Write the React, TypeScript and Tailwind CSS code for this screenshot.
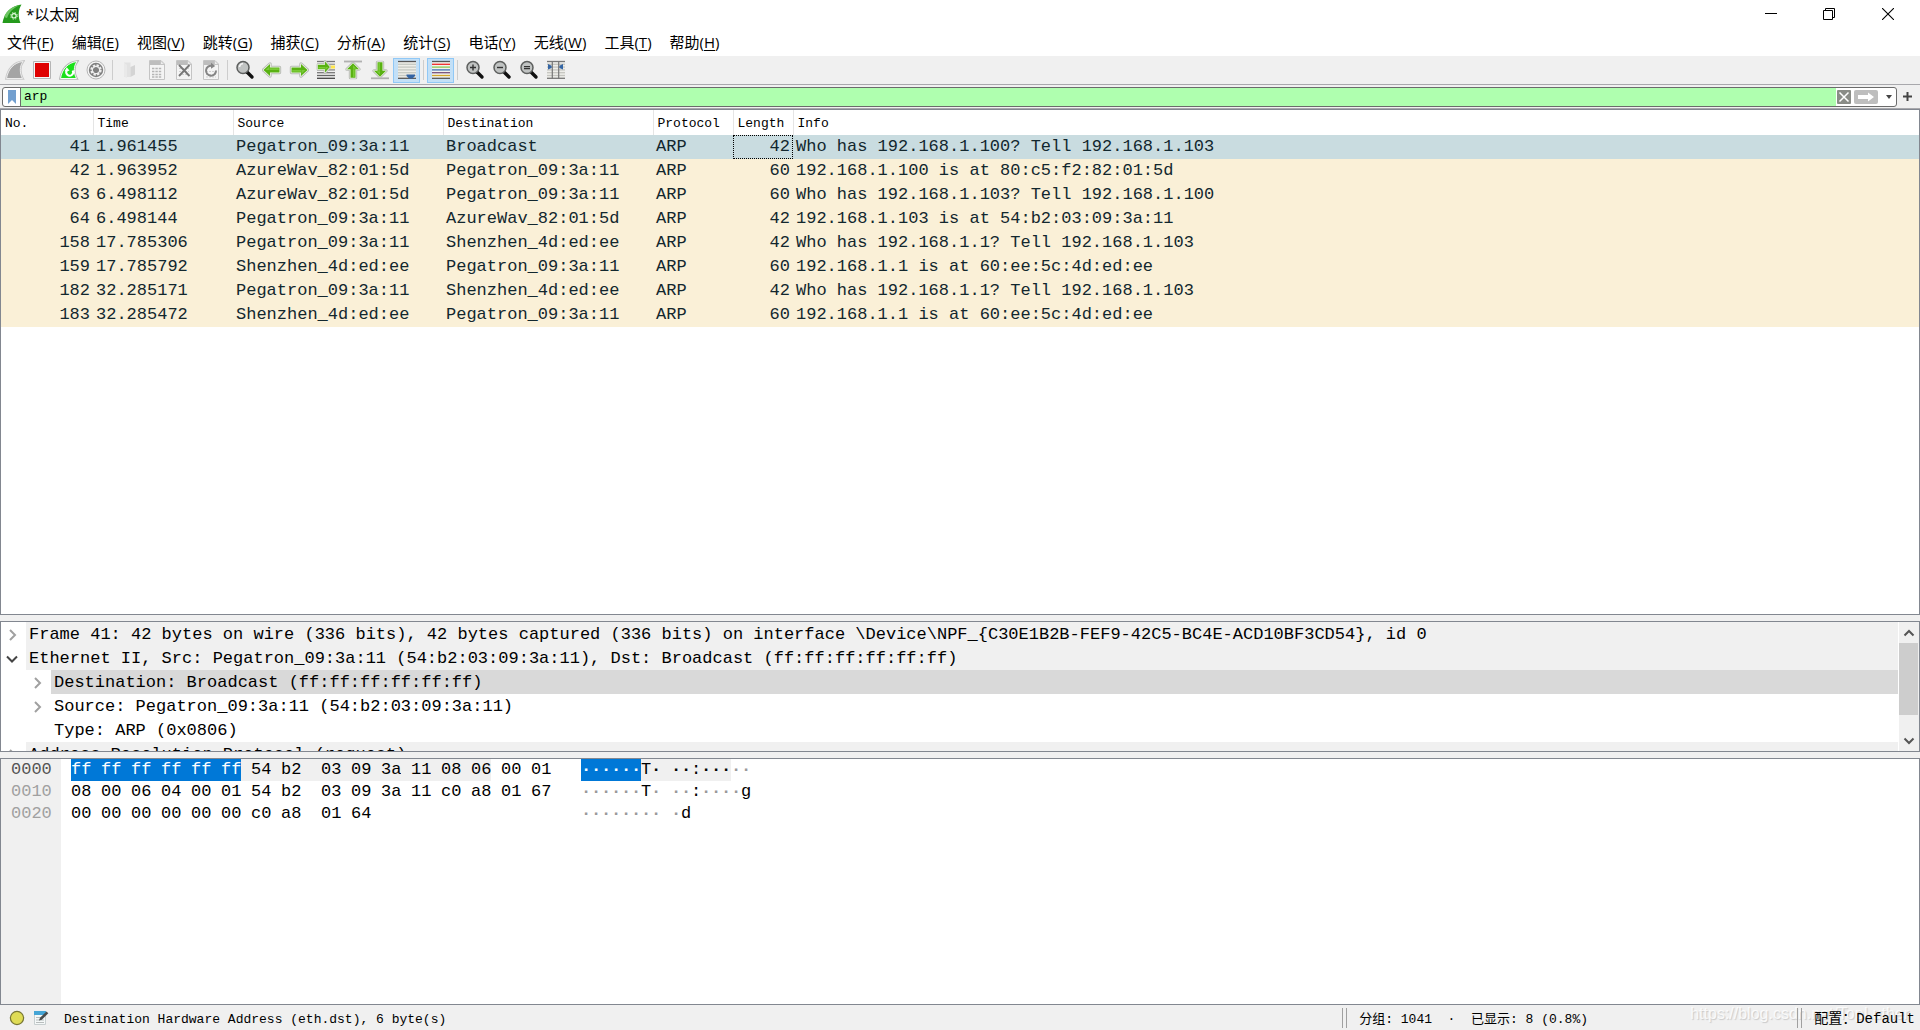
import { FC, Fragment, ReactNode, useState } from 'react';
import clsx from 'clsx';

const MONO = "font-['Liberation_Mono','Noto_Sans_CJK_SC',monospace]";
const UI = "font-['Open_Sans','Noto_Sans_CJK_SC',sans-serif]";

const menuItems = [
  { title: '文件', key: 'F' },
  { title: '编辑', key: 'E' },
  { title: '视图', key: 'V' },
  { title: '跳转', key: 'G' },
  { title: '捕获', key: 'C' },
  { title: '分析', key: 'A' },
  { title: '统计', key: 'S' },
  { title: '电话', key: 'Y' },
  { title: '无线', key: 'W' },
  { title: '工具', key: 'T' },
  { title: '帮助', key: 'H' },
];

const columns = [
  { title: 'No.', width: 'w-[92px]' },
  { title: 'Time', width: 'w-[140px]' },
  { title: 'Source', width: 'w-[210px]' },
  { title: 'Destination', width: 'w-[210px]' },
  { title: 'Protocol', width: 'w-[80px]' },
  { title: 'Length', width: 'w-[60px]' },
  { title: 'Info', width: '' },
];

const packets = [
  ['41', '1.961455', 'Pegatron_09:3a:11', 'Broadcast', 'ARP', '42', 'Who has 192.168.1.100? Tell 192.168.1.103'],
  ['42', '1.963952', 'AzureWav_82:01:5d', 'Pegatron_09:3a:11', 'ARP', '60', '192.168.1.100 is at 80:c5:f2:82:01:5d'],
  ['63', '6.498112', 'AzureWav_82:01:5d', 'Pegatron_09:3a:11', 'ARP', '60', 'Who has 192.168.1.103? Tell 192.168.1.100'],
  ['64', '6.498144', 'Pegatron_09:3a:11', 'AzureWav_82:01:5d', 'ARP', '42', '192.168.1.103 is at 54:b2:03:09:3a:11'],
  ['158', '17.785306', 'Pegatron_09:3a:11', 'Shenzhen_4d:ed:ee', 'ARP', '42', 'Who has 192.168.1.1? Tell 192.168.1.103'],
  ['159', '17.785792', 'Shenzhen_4d:ed:ee', 'Pegatron_09:3a:11', 'ARP', '60', '192.168.1.1 is at 60:ee:5c:4d:ed:ee'],
  ['182', '32.285171', 'Pegatron_09:3a:11', 'Shenzhen_4d:ed:ee', 'ARP', '42', 'Who has 192.168.1.1? Tell 192.168.1.103'],
  ['183', '32.285472', 'Shenzhen_4d:ed:ee', 'Pegatron_09:3a:11', 'ARP', '60', '192.168.1.1 is at 60:ee:5c:4d:ed:ee'],
];

const details = [
  { level: 0, state: 'closed', look: 'bg-[#f0f0f0]', text: 'Frame 41: 42 bytes on wire (336 bits), 42 bytes captured (336 bits) on interface \\Device\\NPF_{C30E1B2B-FEF9-42C5-BC4E-ACD10BF3CD54}, id 0' },
  { level: 0, state: 'open', look: 'bg-[#f0f0f0]', text: 'Ethernet II, Src: Pegatron_09:3a:11 (54:b2:03:09:3a:11), Dst: Broadcast (ff:ff:ff:ff:ff:ff)' },
  { level: 1, state: 'closed', look: 'bg-[#d9d9d9]', text: 'Destination: Broadcast (ff:ff:ff:ff:ff:ff)' },
  { level: 1, state: 'closed', look: '', text: 'Source: Pegatron_09:3a:11 (54:b2:03:09:3a:11)' },
  { level: 1, state: 'leaf', look: '', text: 'Type: ARP (0x0806)' },
  { level: 0, state: 'closed', look: 'bg-[#f0f0f0]', text: 'Address Resolution Protocol (request)' },
];

const bytes = [
  { offset: '0000', hex: 'ff ff ff ff ff ff 54 b2 03 09 3a 11 08 06 00 01', ascii: '······T· ··:·····' },
  { offset: '0010', hex: '08 00 06 04 00 01 54 b2 03 09 3a 11 c0 a8 01 67', ascii: '······T· ··:····g' },
  { offset: '0020', hex: '00 00 00 00 00 00 c0 a8 01 64', ascii: '········ ·d' },
];

// eth.dst is the selected field, the ethernet header is its protocol
const FIELD_END = 6;
const PROTO_END = 14;

const FIN = 'M1.5 18.5C3 9 9 2.5 18 1.5C14.5 6 14.5 13 17.5 18.5Z';
const ARROW = 'M1.5 10L8 4V7.5H17.5V12.5H8V16Z';

const Icon: FC<{ children: ReactNode }> = ({ children }) => (
  <svg viewBox="0 0 20 20" className="size-5" aria-hidden="true">
    {children}
  </svg>
);

const Page: FC<{ children?: ReactNode }> = ({ children }) => (
  <Icon>
    <path d="M2.5 .5H14L17.5 4V19.5H2.5Z" fill="#f4f4f4" stroke="#c4c4c4" />
    <path d="M3 1H14L17 4V5H3Z" fill="#bdbdbd" />
    <path d="M13.5 1V4.5H17" fill="#eee" stroke="#c4c4c4" />
    {children}
  </Icon>
);

const GreenArrow: FC<{ turn: string }> = ({ turn }) => (
  <g transform={turn}>
    <path d={ARROW} fill="#59b112" stroke="#b9bcb6" strokeWidth="3.4" strokeLinejoin="round" />
    <path d={ARROW} fill="#59b112" stroke="#f2f8ec" strokeWidth="1.4" strokeLinejoin="round" />
    <path d={ARROW} fill="#59b112" />
    <path d="M3.5 10L7.5 6.3V10Z M8 8.3H16.8V10H8Z" fill="#79ca35" />
  </g>
);

const Lens: FC<{ sign?: string }> = ({ sign }) => (
  <Icon>
    <path d="M12 12L17 17" stroke="#111" strokeWidth="3.4" strokeLinecap="round" />
    <circle cx="8" cy="7.5" r="6" fill="#c0c3c2" stroke="#5d5f5e" strokeWidth="1.5" />
    {sign ? <path d={sign} stroke="#333" strokeWidth="1.4" /> : <path d="M4.5 7A4 4 0 0 1 8 3.6" fill="none" stroke="#f4f4f4" strokeWidth="1.5" />}
  </Icon>
);

const Lines: FC<{ colors: string[] }> = ({ colors }) => (
  <>
    {colors.map((c, i) => (
      <path key={i} d={`M1 ${1.5 + i * 2.8}H19`} stroke={c} strokeWidth="1.3" />
    ))}
  </>
);

const tools: { name: string; icon: ReactNode; on?: boolean; split?: boolean }[] = [
  {
    name: '开始捕获分组',
    icon: (
      <Icon>
        <path d={FIN} fill="#a5a5a5" stroke="#c9c9c9" strokeWidth="2.6" />
        <path d={FIN} fill="#a5a5a5" stroke="#ededed" strokeWidth="1" />
      </Icon>
    ),
  },
  {
    name: '停止捕获分组',
    icon: (
      <Icon>
        <path d="M1.5 1.5H18.5V18.5H1.5Z" fill="#f5f5f5" stroke="#b5b5b5" />
        <path d="M3 3H17V17H3Z" fill="#df0000" />
      </Icon>
    ),
  },
  {
    name: '重新开始当前捕获',
    icon: (
      <Icon>
        <path d={FIN} fill="#1be01b" stroke="#b5b5b5" strokeWidth="2.6" />
        <path d={FIN} fill="#1be01b" stroke="#f3fff3" strokeWidth="1" />
        <path d="M8 10.2A3.4 3.4 0 1 0 13.6 10.5" fill="none" stroke="#fff" strokeWidth="2" />
        <path d="M5.6 11.2L7.8 7.2L10.6 10.7Z" fill="#fff" />
      </Icon>
    ),
  },
  {
    name: '捕获选项',
    icon: (
      <Icon>
        <circle cx="10" cy="10" r="9" fill="#f5f5f5" stroke="#b5b5b5" />
        <circle cx="10" cy="10" r="7.2" fill="#808080" />
        <circle cx="10" cy="10" r="4.4" fill="none" stroke="#eee" strokeWidth="2.6" strokeDasharray="2.2 1.25" />
        <circle cx="10" cy="10" r="3.7" fill="none" stroke="#eee" strokeWidth="1.2" />
      </Icon>
    ),
    split: true,
  },
  {
    name: '打开',
    icon: (
      <Icon>
        <path d="M4 2.5H10.5V17H4Z" fill="#e2e2e2" />
        <path d="M10.5 7L15 5V14.5L10.5 17Z" fill="#d4d4d4" />
        <path d="M4 2.5L7 5V18L4 16.5Z" fill="#e9e9e9" />
      </Icon>
    ),
  },
  {
    name: '保存',
    icon: (
      <Page>
        <path d="M5 8.5H15M5 11.5H15M5 14.5H15M5 17H15" stroke="#b5b5b5" strokeWidth="1.6" strokeDasharray="2.4 1" />
      </Page>
    ),
  },
  {
    name: '关闭',
    icon: (
      <Page>
        <path d="M5 8.5H15M5 11.5H15M5 14.5H15" stroke="#cfcfcf" strokeDasharray="2 1" />
        <path d="M5 5L15.5 16M15.5 5L5 16" stroke="#777" strokeWidth="1.9" />
      </Page>
    ),
  },
  {
    name: '重新加载',
    icon: (
      <Page>
        <path d="M5 11.5H15M5 14.5H15M5 17H15" stroke="#cfcfcf" strokeDasharray="2 1" />
        <path d="M11 5.8A5 5 0 1 0 15 10.5" fill="none" stroke="#858585" strokeWidth="2" />
        <path d="M10 2.8L14.2 6L10 8.8Z" fill="#858585" />
      </Page>
    ),
    split: true,
  },
  { name: '查找', icon: <Lens /> },
  { name: '上一分组', icon: <Icon><GreenArrow turn="" /></Icon> },
  { name: '下一分组', icon: <Icon><GreenArrow turn="rotate(180 10 10)" /></Icon> },
  {
    name: '转到分组',
    icon: (
      <Icon>
        <Lines colors={['#777', '#999', '#eee04b', '#888', '#777', '#666', '#444']} />
        <path d="M12 7H19" stroke="#ffe64d" strokeWidth="3" />
        <g transform="translate(0 -2) scale(.75 .9)"><GreenArrow turn="rotate(180 10 10)" /></g>
      </Icon>
    ),
  },
  {
    name: '首个分组',
    icon: (
      <Icon>
        <path d="M1 1.5H19" stroke="#b0b0b0" strokeWidth="1.8" />
        <g transform="translate(0 2) scale(1 .9)"><GreenArrow turn="rotate(90 10 10)" /></g>
      </Icon>
    ),
  },
  {
    name: '最新分组',
    icon: (
      <Icon>
        <path d="M1 18.3H19" stroke="#b0b0b0" strokeWidth="1.8" />
        <g transform="scale(1 .9)"><GreenArrow turn="rotate(270 10 10)" /></g>
      </Icon>
    ),
  },
  {
    name: '自动滚动',
    icon: (
      <Icon>
        <path d="M1 1H19V19H1Z" fill="#eeeee8" />
        <Lines colors={['#555', '#c5c9c2', '#c5c9c2', '#c5c9c2', '#c5c9c2', '#c5c9c2', '#555']} />
        <path d="M9.5 14.5H18V16L15.5 18.6H12L9.5 16Z" fill="#3465a4" />
      </Icon>
    ),
    on: true,
    split: true,
  },
  {
    name: '着色',
    icon: (
      <Icon>
        <path d="M1 1H19V19H1Z" fill="#f4f4ee" />
        <Lines colors={['#555', '#ef2929', '#8ac853', '#3f70b5', '#75507b', '#d2a72c', '#555']} />
      </Icon>
    ),
    on: true,
    split: true,
  },
  { name: '放大', icon: <Lens sign="M5 7.5H11M8 4.5V10.5" /> },
  { name: '缩小', icon: <Lens sign="M5 7.5H11" /> },
  { name: '普通大小', icon: <Lens sign="M5 6.6H11M5 8.6H11" /> },
  {
    name: '调整列宽',
    icon: (
      <Icon>
        <path d="M1 1H19V19H1Z" fill="#eeeeea" />
        <Lines colors={['#777', '#c5c5c0', '#c5c5c0', '#c5c5c0', '#c5c5c0', '#c5c5c0', '#777']} />
        <path d="M6.3 1V19M12.7 1V19" stroke="#777" strokeWidth="1.2" />
        <path d="M2 4L5.6 5.8V8L2 9.5Z M13.4 5.8L17 4V9.5L13.4 8Z" fill="#3465a4" />
      </Icon>
    ),
  },
];

const Chevron: FC<{ d: string; color: string }> = ({ d, color }) => (
  <svg viewBox="0 0 12 12" className="size-3" aria-hidden="true">
    <path d={d} fill="none" stroke={color} strokeWidth="2" />
  </svg>
);

const TitleBar: FC = () => (
  <header className={clsx(UI, 'flex h-7 items-center bg-white text-[15px]')}>
    <svg viewBox="0 0 20 20" className="ml-[2px] size-5 shrink-0" aria-hidden="true">
      <path d="M.5 19C2 9 9 1.5 19.5 .5C16 6 16 13 18.5 19Z" fill="#259a1c" />
      <path d="M2 13C5 6 11 2 17.5 1.3C14 3 8 6 5 14Z" fill="#6cc562" />
      <circle cx="12" cy="11.8" r="2.2" fill="none" stroke="#e9ffe5" strokeWidth="1.1" />
      <circle cx="12" cy="11.8" r="3.4" fill="none" stroke="#d9f5d4" strokeWidth=".9" strokeDasharray="1.4 1.3" />
    </svg>
    <h1 className="ml-1">*以太网</h1>
    <div className="ml-auto flex h-full">
      <button aria-label="最小化" className="flex w-[62px] items-center justify-center">
        <svg viewBox="0 0 12 12" className="size-3"><path d="M0 5.5H12" stroke="#000" /></svg>
      </button>
      <button aria-label="还原" className="flex w-[54px] items-center justify-center">
        <svg viewBox="0 0 12 12" className="size-3"><path d="M.5 2.5H9.5V11.5H.5Z M2.5 2.5V.5H11.5V9.5H9.5" fill="none" stroke="#000" /></svg>
      </button>
      <button aria-label="关闭窗口" className="flex w-16 items-center justify-center">
        <svg viewBox="0 0 12 12" className="size-3"><path d="M0 0L12 12M12 0L0 12" stroke="#000" strokeWidth="1.1" /></svg>
      </button>
    </div>
  </header>
);

const MenuBar: FC = () => (
  <nav className={clsx(UI, 'flex h-[26px] items-center gap-[18px] bg-white pl-[7px] pt-[2px] text-[15px]')}>
    {menuItems.map((o) => (
      <button key={o.key} className="whitespace-nowrap">
        {o.title}(<u className="underline-offset-2">{o.key}</u>)
      </button>
    ))}
  </nav>
);

const Toolbar: FC = () => (
  <div role="toolbar" className="flex h-[30px] items-center border-t-2 border-white pl-px">
    {tools.map((o) => (
      <Fragment key={o.name}>
        <button
          aria-label={o.name}
          className={clsx('flex h-[25px] w-[27px] items-center justify-center border', o.on ? 'border-[#90c8f6] bg-[#c3e0f7]' : 'border-transparent')}
        >
          {o.icon}
        </button>
        {o.split && <span className="mx-[3px] h-5 w-px bg-[#cdcdcd]" />}
      </Fragment>
    ))}
  </div>
);

const FilterBar: FC = () => {
  const [filter, setFilter] = useState('arp');
  return (
    <div className="flex h-[25px] items-center border-y border-[#a8a8ac] px-[2px]">
      <div className="flex h-5 flex-1 overflow-hidden rounded-[3px] border border-[#6b6b6b] bg-white">
        <button aria-label="书签" className="flex w-[18px] items-center justify-center border-r border-[#6b6b6b]">
          <svg viewBox="0 0 8 14" className="h-[14px] w-2"><path d="M0 0H8V14L4 10L0 14Z" fill="#729fcf" /></svg>
        </button>
        <input
          aria-label="显示过滤器"
          value={filter}
          onChange={(e) => setFilter(e.target.value)}
          className={clsx(MONO, 'min-w-0 flex-1 bg-[#afffaf] px-[3px] text-[13px] outline-none')}
        />
        <button aria-label="清除" className="ml-px self-center" onClick={() => setFilter('')}>
          <svg viewBox="0 0 14 14" className="size-[14px]">
            <rect width="14" height="14" rx="1" fill="#8a8c87" />
            <path d="M2.5 2.5L11.5 11.5M11.5 2.5L2.5 11.5" stroke="#fff" strokeWidth="1.5" />
          </svg>
        </button>
        <button aria-label="应用" className="ml-[3px] self-center">
          <svg viewBox="0 0 24 14" className="h-[14px] w-6">
            <rect width="24" height="14" rx="2" fill="#bebebe" />
            <path d="M4 5H14V2.5L20 7L14 11.5V9H4Z" fill="#fff" />
          </svg>
        </button>
        <button aria-label="过滤器历史" className="ml-2 mr-1 self-center">
          <svg viewBox="0 0 6 4" className="h-1 w-[6px]"><path d="M0 0H6L3 4Z" fill="#444" /></svg>
        </button>
      </div>
      <button aria-label="添加" className="mx-[6px]">
        <svg viewBox="0 0 9 9" className="size-[9px]"><path d="M4.5 0V9M0 4.5H9" stroke="#444" strokeWidth="2" /></svg>
      </button>
    </div>
  );
};

const PacketList: FC = () => (
  <section className="min-h-0 flex-[504_1_0px] overflow-hidden border border-[#828790] bg-white">
    <table className="w-full table-fixed border-collapse">
      <thead>
        <tr className="h-[25px]">
          {columns.map((o) => (
            <th key={o.title} className={clsx(MONO, o.width, 'overflow-hidden border-r border-[#e5e5e5] pb-0 pl-1 pr-0 pt-[2px] text-left text-[13px] font-normal last:border-r-0')}>
              {o.title}
            </th>
          ))}
        </tr>
      </thead>
      <tbody>
        {packets.map((row, r) => (
          <tr key={row[0]} className={clsx('text-[#12272e]', r === 0 ? 'bg-[#c9dce0]' : 'bg-[#faf0d7]')}>
            {row.map((cell, i) => (
              <td
                key={i}
                className={clsx(
                  MONO,
                  'h-6 whitespace-pre p-0 text-[17px] leading-6',
                  i === 0 || i === 5 ? 'pr-[3px] text-right' : 'pl-[3px]',
                  r === 0 && i === 5 && 'outline outline-1 -outline-offset-1 outline-dotted outline-black',
                )}
              >
                {cell}
              </td>
            ))}
          </tr>
        ))}
      </tbody>
    </table>
  </section>
);

const PacketDetails: FC = () => (
  <section className="flex min-h-0 flex-[129_1_0px] overflow-hidden border border-[#828790] bg-white">
    <ul className={clsx(MONO, 'min-w-0 flex-1 text-[17px] leading-[26px]')}>
      {details.map((o) => (
        <li key={o.text} className={clsx('flex h-6', o.level === 1 && 'pl-[25px]')}>
          <span className="flex w-[25px] shrink-0 items-center pl-[5px] pt-px">
            {o.state !== 'leaf' && (
              <button aria-label={o.text}>
                {o.state === 'open' ? <Chevron d="M1 3.5L6 8.5L11 3.5" color="#444" /> : <Chevron d="M4 1L9 6L4 11" color="#a0a0a0" />}
              </button>
            )}
          </span>
          <span className={clsx('flex-1 whitespace-pre pl-[3px]', o.look)}>{o.text}</span>
        </li>
      ))}
    </ul>
    <div className="ml-px flex w-5 flex-col items-center bg-[#f0f0f0] pr-px">
      <button aria-label="向上滚动" className="flex h-[21px] items-center"><Chevron d="M1.5 8.5L6 4L10.5 8.5" color="#555" /></button>
      <div className="h-[72px] w-full bg-[#cdcdcd]" />
      <button aria-label="向下滚动" className="mt-auto flex h-[21px] items-center"><Chevron d="M1.5 3.5L6 8L10.5 3.5" color="#555" /></button>
    </div>
  </section>
);

// Background of a byte in the first row; later rows are never marked
const markOf = (row: number, i: number) => {
  if (row > 0 || i >= PROTO_END) return '';
  return i < FIELD_END ? 'bg-[#0078d7] text-white' : 'bg-[#f0f0f0]';
};

const HexRow: FC<{ row: number; hex: string[] }> = ({ row, hex }) => (
  <p className="flex">
    {hex.map((b, i) => (
      <Fragment key={i}>
        {i > 0 && <span className={clsx(i === 8 ? 'w-5' : 'w-[10px]', i === FIELD_END ? row === 0 && 'bg-[#f0f0f0]' : markOf(row, i))} />}
        <span className={clsx('w-5', markOf(row, i))}>{b}</span>
      </Fragment>
    ))}
  </p>
);

const AsciiRow: FC<{ row: number; ascii: string }> = ({ row, ascii }) => (
  <p className="flex">
    {[...ascii].map((c, pos) => {
      // the gap after eight bytes takes one place
      const i = pos > 8 ? pos - 1 : pos;
      const mark = markOf(row, i);
      return (
        <span key={pos} className={clsx('w-[10px]', mark, c === '·' && 'font-bold', c === '·' && !mark && 'text-[#999]')}>
          {c}
        </span>
      );
    })}
  </p>
);

const PacketBytes: FC = () => (
  <section className={clsx(MONO, 'flex min-h-0 flex-[245_1_0px] overflow-hidden border border-[#828790] bg-white text-[17px] leading-[22px]')}>
    <div className="w-[60px] bg-[#f0f0f0] pl-[10px] text-[#a0a0a0]">
      {bytes.map((o, i) => (
        <p key={o.offset} className={clsx(i === 0 && 'text-[#555]')}>
          {o.offset}
        </p>
      ))}
    </div>
    <div className="whitespace-pre pl-[10px]">
      {bytes.map((o, i) => (
        <HexRow key={o.offset} row={i} hex={o.hex.split(' ')} />
      ))}
    </div>
    <div className="whitespace-pre pl-[30px]">
      {bytes.map((o, i) => (
        <AsciiRow key={o.offset} row={i} ascii={o.ascii} />
      ))}
    </div>
  </section>
);

const Grip: FC = () => <span className="h-5 w-[5px] border-x border-[#a0a0a0]" />;

const StatusBar: FC = () => (
  <footer className={clsx(MONO, 'relative flex h-[25px] items-center whitespace-pre text-[13px]')}>
    <span className="pointer-events-none absolute right-[11px] top-[-3px] font-['Liberation_Sans',sans-serif] text-[16px] text-white/80 [text-shadow:1px_1px_1px_#c8c8c8]">
      https://blog.csdn.net/TopLuther
    </span>
    <button aria-label="专家信息" className="ml-[9px]">
      <svg viewBox="0 0 16 16" className="size-4"><circle cx="8" cy="8" r="6.6" fill="#dfdc55" stroke="#777634" strokeWidth="1.2" /></svg>
    </button>
    <button aria-label="捕获文件注释" className="ml-2">
      <svg viewBox="0 0 16 16" className="size-4">
        <path d="M1.5 1.5H12.5V14.5H1.5Z" fill="#f5f8f8" stroke="#c8cfd0" />
        <path d="M1 1H13V5H1Z" fill="#45a5d5" />
        <path d="M3 7.5H8M3 10H11M3 12.5H11" stroke="#b8bdbd" />
        <path d="M6 10.5L7 7.8L13.5 1.5L15.3 3.2L8.8 9.8Z" fill="#484b4b" />
      </svg>
    </button>
    <span className="ml-[15px] flex-1 pt-1">Destination Hardware Address (eth.dst), 6 byte(s)</span>
    <div className="flex w-[455px] items-center gap-3">
      <Grip />
      <span className="pt-1">分组: 1041  ·  已显示: 8 (0.8%)</span>
    </div>
    <div className="relative flex items-center gap-3 pr-[5px]">
      <Grip />
      <span className="pt-1 text-[14px]">配置：Default</span>
    </div>
  </footer>
);

const App: FC = () => (
  <div className="flex h-screen flex-col bg-[#f0f0f0] text-black [&_button]:shrink-0">
    <TitleBar />
    <MenuBar />
    <Toolbar />
    <FilterBar />
    <main className="flex min-h-0 flex-1 flex-col gap-[6px]">
      <PacketList />
      <PacketDetails />
      <PacketBytes />
    </main>
    <StatusBar />
  </div>
);

export default App;
